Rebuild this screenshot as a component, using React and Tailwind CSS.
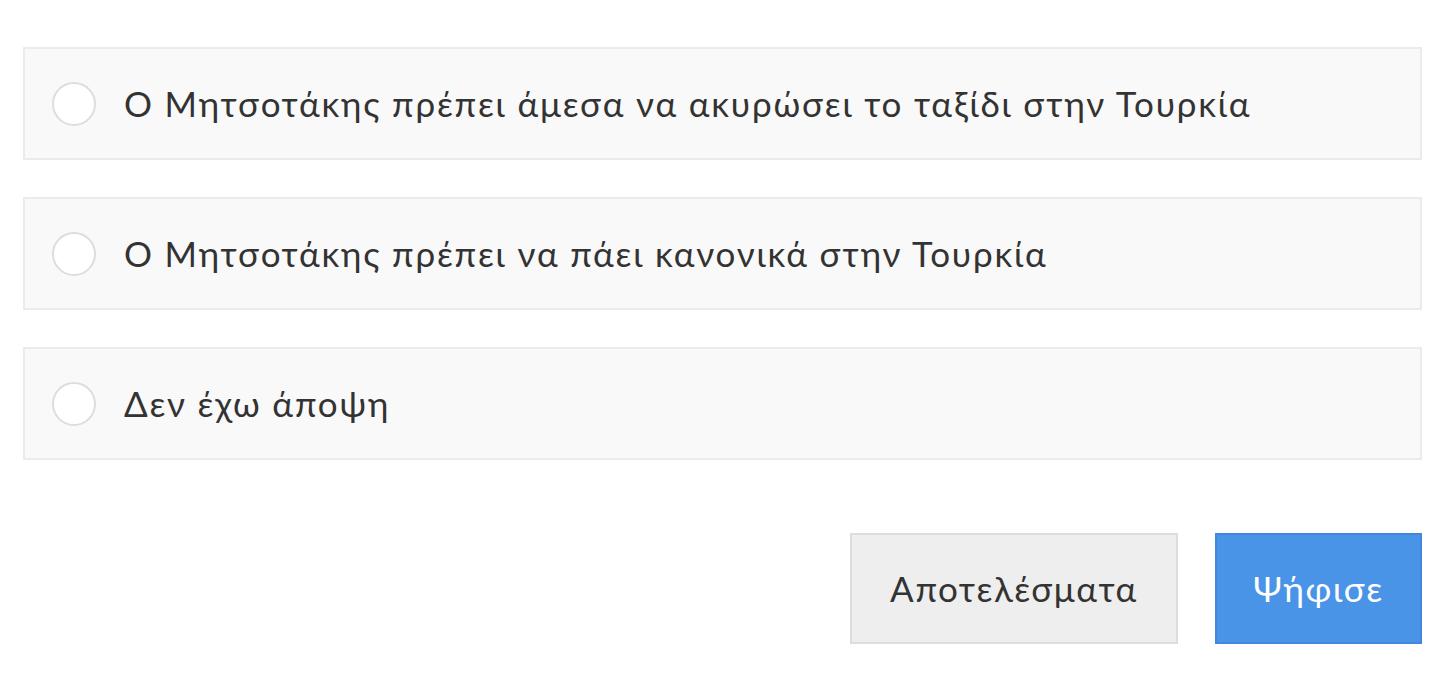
const options = [
  'Ο Μητσοτάκης πρέπει άμεσα να ακυρώσει το ταξίδι στην Τουρκία',
  'Ο Μητσοτάκης πρέπει να πάει κανονικά στην Τουρκία',
  'Δεν έχω άποψη',
];

export default function App() {
  return (
    <div
      className="min-h-screen bg-white pl-[23px] pr-[32px] pt-[47px] text-[#333]"
      style={{fontFamily: 'Lato, "Noto Sans", sans-serif'}}
    >
      <div className="flex flex-col gap-[37px]">
        {options.map((opt) => (
          <label
            key={opt}
            className="flex h-[113px] items-center border-2 border-[#ebebeb] bg-[#f9f9f9] pl-[27px]"
          >
            <span className="h-[44px] w-[44px] shrink-0 rounded-full border-2 border-[#dddddd] bg-white" />
            <span className="ml-[28px] text-[35px] tracking-[1.8px]">{opt}</span>
          </label>
        ))}
      </div>

      <div className="mt-[73px] flex justify-end gap-[37px]">
        <button className="h-[111px] w-[328px] border-2 border-[#dddddd] bg-[#eeeeee] text-[35px] tracking-[1.6px] text-[#333]">
          Αποτελέσματα
        </button>
        <button className="h-[111px] w-[207px] border-2 border-[#3f88dd] bg-[#4a94e8] text-[35px] tracking-[1.6px] text-white">
          Ψήφισε
        </button>
      </div>
    </div>
  );
}
